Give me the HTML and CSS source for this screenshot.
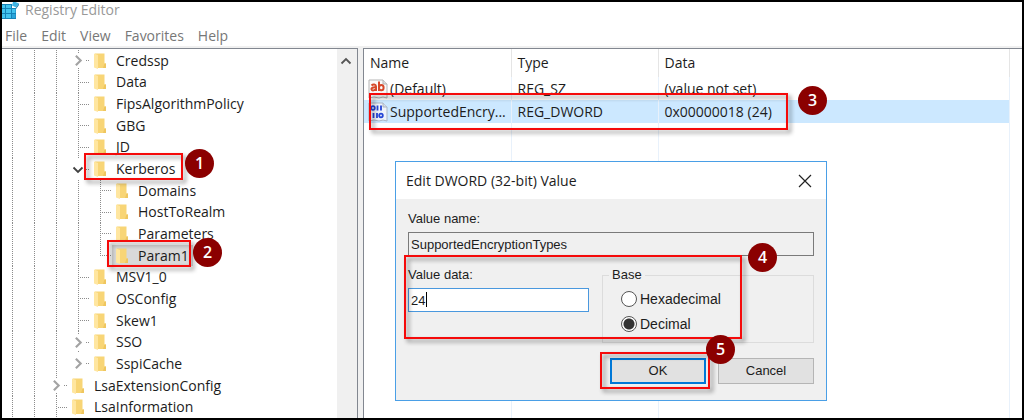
FILE: index.html
```html
<!DOCTYPE html>
<html lang="en">
<head>
<meta charset="utf-8">
<title>Registry Editor</title>
<link rel="stylesheet" href="styles.css">
</head>
<body>
<svg class="defs" aria-hidden="true">
  <symbol id="folder" viewBox="0 0 12 16">
    <path d="M1 0.500h9.500v10H12V15H1z" fill="#f8d576"/>
    <path d="M10.500 10.500H12V15H9z" fill="#efc65f"/>
    <path d="M0 0.500l4 1.500V16L0 14.500z" fill="#ffe6a0"/>
  </symbol>
  <symbol id="right" viewBox="0 0 10 14"><path d="M3 2.500L7.500 7L3 11.500" fill="none" stroke="#a3a3a3" stroke-width="2"/></symbol>
  <symbol id="down" viewBox="0 0 12 14"><path d="M1.500 5L6 9.500L10.500 5" fill="none" stroke="#404040" stroke-width="1.800"/></symbol>
</svg>
<div class="window">
  <header class="titlebar">
    <svg class="app-icon" viewBox="0 0 17 18" aria-hidden="true">
      <path d="M0 2h10v4h4v11H0z" fill="#1583b8"/>
      <g fill="#43c3ee"><path d="M0 3h3v3H0zM4 3h5v3H4zM0 7h3v4H0zM4 7h5v4H4zM10 7h3.500v4H10zM0 12h3v4H0zM4 12h5v4H4z"/></g>
      <path d="M10 12h3.500v4H10z" fill="#2aa5da"/>
      <path d="M13.500 0L17 1.500L14 5.500L10 3.500L11 0z" fill="#3fb4e4"/>
      <path d="M14 5.500L17 1.500V3L14 7z" fill="#1476a8"/>
    </svg>
    <h1>Registry Editor</h1>
  </header>
  <nav class="menubar">
    <button>File</button><button>Edit</button><button>View</button><button>Favorites</button><button>Help</button>
  </nav>
  <main class="panes">
    <section class="tree-pane">
      <ul class="tree">
        <li><i class="g line"></i><i class="g line"></i><i class="g line"></i><i class="g line node"><svg><use href="#right"/></svg></i><span class="key"><svg><use href="#folder"/></svg>Credssp</span></li>
        <li><i class="g line"></i><i class="g line"></i><i class="g line"></i><i class="g line leaf"></i><span class="key"><svg><use href="#folder"/></svg>Data</span></li>
        <li><i class="g line"></i><i class="g line"></i><i class="g line"></i><i class="g line leaf"></i><span class="key"><svg><use href="#folder"/></svg>FipsAlgorithmPolicy</span></li>
        <li><i class="g line"></i><i class="g line"></i><i class="g line"></i><i class="g line leaf"></i><span class="key"><svg><use href="#folder"/></svg>GBG</span></li>
        <li><i class="g line"></i><i class="g line"></i><i class="g line"></i><i class="g line leaf"></i><span class="key"><svg><use href="#folder"/></svg>JD</span></li>
        <li><i class="g line"></i><i class="g line"></i><i class="g line"></i><i class="g node open"><svg><use href="#down"/></svg></i><span class="key"><svg><use href="#folder"/></svg>Kerberos</span></li>
        <li><i class="g line"></i><i class="g line"></i><i class="g line"></i><i class="g line"></i><i class="g line leaf"></i><span class="key"><svg><use href="#folder"/></svg>Domains</span></li>
        <li><i class="g line"></i><i class="g line"></i><i class="g line"></i><i class="g line"></i><i class="g line leaf"></i><span class="key"><svg><use href="#folder"/></svg>HostToRealm</span></li>
        <li><i class="g line"></i><i class="g line"></i><i class="g line"></i><i class="g line"></i><i class="g line leaf"></i><span class="key"><svg><use href="#folder"/></svg>Parameters</span></li>
        <li><i class="g line"></i><i class="g line"></i><i class="g line"></i><i class="g line"></i><i class="g leaf last"></i><span class="key selected"><svg><use href="#folder"/></svg>Param1</span></li>
        <li><i class="g line"></i><i class="g line"></i><i class="g line"></i><i class="g line leaf"></i><span class="key"><svg><use href="#folder"/></svg>MSV1_0</span></li>
        <li><i class="g line"></i><i class="g line"></i><i class="g line"></i><i class="g line leaf"></i><span class="key"><svg><use href="#folder"/></svg>OSConfig</span></li>
        <li><i class="g line"></i><i class="g line"></i><i class="g line"></i><i class="g line leaf"></i><span class="key"><svg><use href="#folder"/></svg>Skew1</span></li>
        <li><i class="g line"></i><i class="g line"></i><i class="g line"></i><i class="g line node"><svg><use href="#right"/></svg></i><span class="key"><svg><use href="#folder"/></svg>SSO</span></li>
        <li><i class="g line"></i><i class="g line"></i><i class="g line"></i><i class="g node"><svg><use href="#right"/></svg></i><span class="key"><svg><use href="#folder"/></svg>SspiCache</span></li>
        <li><i class="g line"></i><i class="g line"></i><i class="g line node"><svg><use href="#right"/></svg></i><span class="key"><svg><use href="#folder"/></svg>LsaExtensionConfig</span></li>
        <li><i class="g line"></i><i class="g line"></i><i class="g line leaf"></i><span class="key"><svg><use href="#folder"/></svg>LsaInformation</span></li>
      </ul>
      <div class="scrollbar">
        <button aria-label="Scroll up"><svg viewBox="0 0 12 8"><path d="M1.500 6.500L6 2L10.500 6.500" fill="none" stroke="#555" stroke-width="1.800"/></svg></button>
      </div>
    </section>
    <section class="list-pane">
      <table>
        <thead><tr><th class="name">Name</th><th class="type">Type</th><th>Data</th></tr></thead>
        <tbody>
          <tr>
            <td><span class="value"><svg viewBox="0 0 20 20"><path d="M1 1h14l4 4v14l-4-1l-4 1l-5-1l-5 1z" fill="#fafafa" stroke="#b5b5b5"/><path d="M15 1v4h4" fill="#ddd" stroke="#b5b5b5"/><g fill="none" stroke="#d6492a" stroke-width="2"><path d="M3.500 6.500C5 5 8 5 8 7.500V12M8 8.500C5 8 3 9 3.500 10.500C4 12 7 11.500 8 10"/><path d="M11 2.500V12"/><ellipse cx="13.300" cy="8.700" rx="2.300" ry="2.600"/></g></svg>(Default)</span></td>
            <td>REG_SZ</td><td>(value not set)</td>
          </tr>
          <tr class="selected">
            <td><span class="value"><svg viewBox="0 0 20 20"><path d="M1 1h14l4 4v14l-4-1l-4 1l-5-1l-5 1z" fill="#eef3fb" stroke="#a9b4c4"/><path d="M15 1v4h4" fill="#d5dce6" stroke="#a9b4c4"/><g fill="none" stroke="#2445d6" stroke-width="1.800"><ellipse cx="5" cy="6" rx="1.800" ry="1.800"/><path d="M9.500 3.500V8.500M13 3.500V8.500M5.500 11V16M9 11V16"/><ellipse cx="13" cy="13.500" rx="1.800" ry="1.800"/></g></svg>SupportedEncry...</span></td>
            <td>REG_DWORD</td><td>0x00000018 (24)</td>
          </tr>
          <tr class="rest"><td></td><td></td><td></td></tr>
        </tbody>
      </table>
    </section>
  </main>

  <form class="dialog" role="dialog" aria-labelledby="dlg-title">
    <div class="dialog-title">
      <h2 id="dlg-title">Edit DWORD (32-bit) Value</h2>
      <button type="button" aria-label="Close"><svg viewBox="0 0 14 14"><path d="M1 1L13 13M13 1L1 13" stroke="#222" stroke-width="1.200"/></svg></button>
    </div>
    <div class="dialog-body">
      <label for="vname">Value name:</label>
      <input id="vname" class="readonly" type="text" value="SupportedEncryptionTypes" readonly>
      <div class="fields">
        <div class="data">
          <label for="vdata">Value data:</label>
          <div class="edit"><input id="vdata" type="text" value="24"><span class="caret"></span></div>
        </div>
        <fieldset>
          <legend>Base</legend>
          <label><input type="radio" name="base">Hexadecimal</label>
          <label><input type="radio" name="base" checked>Decimal</label>
        </fieldset>
      </div>
      <div class="actions">
        <button type="button" class="default">OK</button>
        <button type="button">Cancel</button>
      </div>
    </div>
  </form>

  <div class="box box1"></div><div class="box box2"></div><div class="box box3"></div><div class="box box4"></div><div class="box box5"></div>
  <span class="step step1">1</span><span class="step step2">2</span><span class="step step3">3</span><span class="step step4">4</span><span class="step step5">5</span>
</div>
</body>
</html>
```

FILE: styles.css
```css
* { box-sizing: border-box; }
body { margin: 0; font: 14px/20px "Open Sans", "Noto Sans", sans-serif; color: #1c1c1c; }
button { font: inherit; color: inherit; border: 0; background: none; padding: 0; }
h1, h2 { margin: 0; font-size: inherit; font-weight: 400; }
.defs { position: absolute; width: 0; height: 0; }

.window {
  position: relative;
  display: flex;
  flex-direction: column;
  height: 100vh;
  border: 2px solid #000;
  background: #fff;
  overflow: hidden;
}
.titlebar { display: flex; gap: 6px; height: 18px; color: #999; line-height: 16px; }
.app-icon { width: 17px; height: 18px; }
.menubar { display: flex; align-items: flex-end; gap: 14px; height: 26px; padding: 0 3px; color: #777; }
.panes { flex: 1; display: flex; gap: 5px; min-height: 0; background: #f0f0f0; padding-top: 2px; }

.tree-pane { display: flex; width: 356px; border: solid #828790; border-width: 1px 1px 0 0; background: #fff; }
.tree { flex: 1; display: grid; grid-auto-rows: 1fr; margin: 0; padding: 1px 0 0; list-style: none; }
.tree li { display: flex; min-height: 0; white-space: nowrap; }
.g {
  --v: repeating-linear-gradient(#8c8c8c 0 1px, #fff 1px 2px);
  --h: repeating-linear-gradient(90deg, #8c8c8c 0 1px, #fff 1px 2px);
  width: 22px;
  background-repeat: no-repeat;
}
.line { background-image: var(--v); background-position: 10px 0; background-size: 1px 100%; }
.line.leaf { background-image: var(--v), var(--h); background-position: 10px 0, 10px 50%; background-size: 1px 100%, 12px 1px; }
.last { background-image: var(--v), var(--h); background-position: 10px 0, 10px 50%; background-size: 1px 50%, 12px 1px; }
.node { display: flex; align-items: center; padding-left: 4px; }
.node svg { width: 12px; height: 15px; background: #fff; }
.node::after { content: ""; width: 4px; height: 1px; margin-left: 2px; background: var(--h); }
.key { display: flex; align-items: center; gap: 10px; padding: 0 4px; }
.key svg { width: 12px; height: 16px; }
.key.selected { background: #d9d9d9; }

.scrollbar { width: 20px; background: #f0f0f0; }
.scrollbar button { display: flex; justify-content: center; width: 18px; padding-top: 8px; }
.scrollbar svg { width: 12px; height: 8px; }

.list-pane { flex: 1; border: solid #828790; border-width: 1px 0 0 1px; background: #fff; padding-right: 12px; }
table { width: 100%; height: 100%; border-collapse: collapse; table-layout: fixed; }
th, td { padding: 0 0 0 6px; font-weight: 400; text-align: left; white-space: nowrap; border-right: 1px solid #e8f1fb; }
th { height: 28px; border-color: #e5e5e5; }
th:first-child { padding-left: 6px; }
td:first-child { padding-left: 4px; }
.name { width: 147px; }
.type { width: 147px; }
tbody tr { height: 23px; }
tbody .rest { height: auto; }
.value { display: flex; align-items: center; gap: 2px; }
.value svg { width: 20px; height: 20px; }
tr.selected { background: #cce8ff; }

.dialog {
  position: absolute;
  left: 393px;
  top: 159px;
  width: 432px;
  border: 1px solid #4a9fe6;
  background: #f0f0f0;
  font: 13px/18px "Liberation Sans", Arial, sans-serif;
}
.dialog-title {
  display: flex;
  justify-content: space-between;
  align-items: center;
  height: 37px;
  padding: 0 14px 0 10px;
  background: #fff;
  font: 14px/20px "Open Sans", "Noto Sans", sans-serif;
}
.dialog-title button, .dialog-title svg { display: block; width: 14px; height: 14px; }
.dialog-body { padding: 11px 12px 16px; }
.dialog label { display: block; }
.dialog input[type="text"] { display: block; width: 100%; height: 24px; padding: 0 2px; border: 1px solid #4a98de; background: #fff; font: inherit; color: inherit; }
.dialog input.readonly { margin-top: 4px; background: #f0f0f0; border-color: #7a7a7a; }
.fields { display: flex; justify-content: space-between; margin-top: 10px; }
.data { width: 181px; }
.edit { position: relative; margin-top: 4px; }
.caret { position: absolute; left: 18px; top: 4px; width: 1px; height: 15px; background: #000; }
fieldset { width: 212px; margin: 0; padding: 2px 18px 6px; border: 1px solid #dcdcdc; }
legend { margin-left: -12px; padding: 0 3px; }
.dialog fieldset label { display: flex; align-items: center; gap: 3px; height: 25px; font-size: 14px; }
input[type="radio"] { appearance: none; width: 16px; height: 16px; margin: 0; border: 1px solid #555; border-radius: 50%; background: #fff; }
input[type="radio"]:checked { background: radial-gradient(circle, #333 0 5px, #fff 6px); }
.actions { display: flex; justify-content: flex-end; gap: 12px; margin-top: 15px; }
.actions button { width: 96px; height: 26px; border: 1px solid #b5b5b5; background: #e1e1e1; }
.actions .default { border: 2px solid #0078d7; }

.box { position: absolute; border: 2px solid #f50a0a; filter: drop-shadow(3px 3px 2px rgba(0, 0, 0, .45)); }
.box1 { left: 82px; top: 151px; width: 99px; height: 27px; }
.box2 { left: 105px; top: 238px; width: 84px; height: 27px; }
.box3 { left: 367px; top: 91px; width: 419px; height: 37px; }
.box4 { left: 402px; top: 253px; width: 338px; height: 84px; }
.box5 { left: 598px; top: 350px; width: 110px; height: 37px; }
.step { position: absolute; width: 29px; height: 29px; border-radius: 50%; background: #8b0000; color: #fff; font-size: 16px; font-weight: 600; line-height: 28px; text-align: center; }
.step1 { left: 183px; top: 147px; }
.step2 { left: 191px; top: 236px; }
.step3 { left: 796px; top: 84px; }
.step4 { left: 746px; top: 241px; }
.step5 { left: 704px; top: 333px; }
```
